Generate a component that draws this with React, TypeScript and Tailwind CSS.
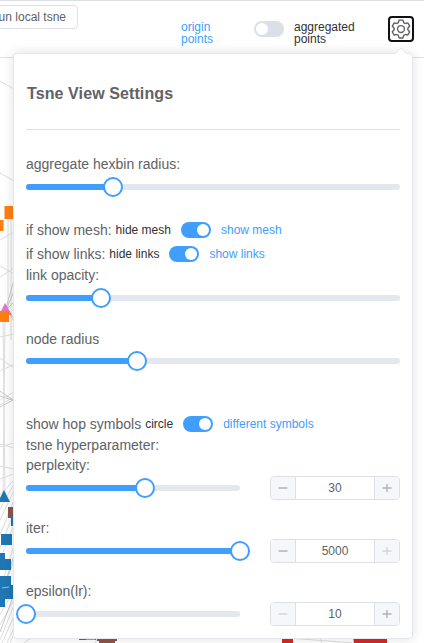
import React from "react";

function Toggle({ on }: { on: boolean }) {
  return (
    <span
      className={
        "flex h-4 w-[30px] shrink-0 items-center rounded-full px-0.5 " +
        (on ? "justify-end bg-[#409eff]" : "justify-start bg-[#dcdfe6]")
      }
    >
      <span className="size-3 rounded-full bg-white" />
    </span>
  );
}

function Slider({ value }: { value: number }) {
  return (
    <div className="relative h-1.5 w-full rounded-[3px] bg-[#e4e7ed]">
      <div className="h-1.5 rounded-l-[3px] bg-[#409eff]" style={{ width: value + "px" }} />
      <div
        className="absolute -top-[7px] size-5 -translate-x-1/2 rounded-full border-2 border-[#409eff] bg-white"
        style={{ left: value + "px" }}
      />
    </div>
  );
}

function SwitchRow({ label, off, on, className }: { label: string; off: string; on: string; className?: string }) {
  return (
    <div className={"flex h-6 items-center whitespace-nowrap " + (className ?? "")}>
      <span>{label}</span>
      <span className="ml-1 text-xs text-[#303133]">{off}</span>
      <span className="mx-2.5">
        <Toggle on />
      </span>
      <span className="text-xs text-[#409eff]">{on}</span>
    </div>
  );
}

function StepIcon({ plus, dim }: { plus?: boolean; dim?: boolean }) {
  return (
    <svg width="12" height="12" viewBox="0 0 12 12" fill="none" stroke={dim ? "#d4d6da" : "#b0b2b6"}>
      <path d="M1.5 6H10.5" strokeWidth="1.7" />
      {plus && <path d="M6 2V10" strokeWidth="1.4" />}
    </svg>
  );
}

function NumberRow({ slider, value, min, max }: { slider: number; value: string; min?: boolean; max?: boolean }) {
  return (
    <div className="mt-px flex h-6 items-center justify-between">
      <div className="w-[214px]">
        <Slider value={slider} />
      </div>
      <div className="flex h-6 w-[130px] overflow-hidden rounded-[4px] border border-[#dcdfe6] text-xs">
        <span className="flex w-[25px] items-center justify-center border-r border-[#dcdfe6] bg-[#f5f7fa]">
          <StepIcon dim={min} />
        </span>
        <span className="flex flex-1 items-center justify-center">{value}</span>
        <span className="flex w-[25px] items-center justify-center border-l border-[#dcdfe6] bg-[#f5f7fa]">
          <StepIcon plus dim={max} />
        </span>
      </div>
    </div>
  );
}

function Graph() {
  return (
    <svg className="absolute left-0 top-[58px]" width="424" height="585" viewBox="0 58 424 585">
      <g stroke="#dedede" fill="none" strokeWidth="1">
        <path d="M0 81L14 89M0 173L14 181M0 240L14 232M8 218L8 320M11 210L11 340" />
        <path d="M0 266L14 274M0 277L14 268M0 337L14 334M0 358L14 368M0 371L14 364M0 400L14 392M0 405L14 397M0 444L14 448M0 447L14 443M0 466L14 469M0 479L14 474" />
        <path d="M3 318L5 495M5 318L3 495M0 495L14 480M0 509L14 484M0 560L14 525M0 590L14 545M0 600L14 560M0 615L14 590M0 625L14 600M0 640L14 605M2 643L14 616M7 643L14 628" />
        <path d="M0 520L14 490M0 535L14 500M0 548L14 512M10 643L14 634M24 643L32 637M95 643L98 637M288 638L354 643M320 638L322 643" />
      </g>
      <g stroke="#c8c8c8" fill="none" strokeWidth="1">
        <path d="M6 308L14 280M7 308L14 291M7 309L14 302M7 310L14 321M6 310L14 318M0 391L13 400L0 407M0 396L12 400M0 600L14 555M0 632L14 594" />
      </g>
      <path d="M4.5 206H14V219H4.5ZM0 220H3.5V231H0Z" fill="#ff7f0e" />
      <path d="M5 303L12 315H-1Z" fill="#e377c2" />
      <path d="M0 311H9V322H0Z" fill="#ff7f0e" />
      <path d="M4 490L10 502H-2Z" fill="#1f77b4" />
      <path d="M8 507H14V518H8Z" fill="#8c564b" />
      <path d="M11 515H14V526H11ZM1 534H12V545H1ZM0 553H5V559H11V570H0ZM0 576H11V585H14V599H5V607H0Z" fill="#1f77b4" />
      <path d="M2 588L9 587" stroke="#9dc3df" />
      <path d="M97 637H117V641H115V643H99V641H97Z" fill="#8c564b" />
      <path d="M79 637H96V640H79Z" fill="#8c564b" />
      <path d="M86 638H95V640H86Z" fill="#d9964f" />
      <path d="M282 637H293V643H282ZM353 637H387V643H354Z" fill="#d62728" />
    </svg>
  );
}

export default function App() {
  return (
    <div className="relative h-[643px] w-[424px] overflow-hidden bg-white font-['Liberation_Sans',Arial,sans-serif] text-sm text-[#606266]">
      <header className="h-[58px] border-y border-[#dcdfe6]">
        <div className="flex items-start">
          <button className="-ml-4 mt-1 h-6 w-[94px] whitespace-nowrap rounded-[4px] border border-[#dcdfe6] bg-white pr-[11px] text-right text-xs">
            run local tsne
          </button>
          <div className="ml-[103px] mt-5 w-[63px] text-xs leading-3 text-[#409eff]">
            origin
            <br />
            points
          </div>
          <div className="ml-2.5 mt-5">
            <Toggle on={false} />
          </div>
          <div className="ml-2.5 mt-5 w-[94px] text-xs leading-3 text-[#303133]">
            aggregated
            <br />
            points
          </div>
          <button className="mt-[15px] flex size-[26px] items-center justify-center rounded-[4px] border-2 border-[#101010] bg-white">
            <svg className="shrink-0" width="22" height="22" viewBox="0 0 1024 1024" fill="#606266">
              <path d="M600.704 64a32 32 0 0 1 30.464 22.208l35.2 109.376c14.784 7.232 28.928 15.36 42.432 24.512l112.384-24.192a32 32 0 0 1 34.432 15.36L944.32 364.8a32 32 0 0 1-4.032 37.504l-77.12 85.12a357.12 357.12 0 0 1 0 49.024l77.12 85.248a32 32 0 0 1 4.032 37.504l-88.704 153.6a32 32 0 0 1-34.432 15.296L708.8 803.904c-13.44 9.088-27.648 17.28-42.368 24.512l-35.264 109.376A32 32 0 0 1 600.704 960H423.296a32 32 0 0 1-30.464-22.208L357.696 828.48a351.616 351.616 0 0 1-42.56-24.64l-112.32 24.256a32 32 0 0 1-34.432-15.36L79.68 659.2a32 32 0 0 1 4.032-37.504l77.12-85.248a357.12 357.12 0 0 1 0-48.896l-77.12-85.248A32 32 0 0 1 79.68 364.8l88.704-153.6a32 32 0 0 1 34.432-15.296l112.32 24.256c13.568-9.152 27.776-17.408 42.56-24.64l35.2-109.312A32 32 0 0 1 423.232 64H600.64zm-23.424 64H446.72l-36.352 113.088-24.512 11.968a294.113 294.113 0 0 0-34.816 20.096l-22.656 15.36-116.224-25.088-65.28 113.152 79.68 88.192-1.92 27.136a293.12 293.12 0 0 0 0 40.192l1.92 27.136-79.808 88.192 65.344 113.152 116.224-25.024 22.656 15.296a294.113 294.113 0 0 0 34.816 20.096l24.512 11.968L446.72 896h130.688l36.48-113.152 24.448-11.904a288.282 288.282 0 0 0 34.752-20.096l22.592-15.296 116.288 25.024 65.28-113.152-79.744-88.192 1.92-27.136a293.12 293.12 0 0 0 0-40.256l-1.92-27.136 79.808-88.128-65.344-113.152-116.288 24.96-22.592-15.232a287.616 287.616 0 0 0-34.752-20.096l-24.448-11.904L577.344 128zM512 320a192 192 0 1 1 0 384 192 192 0 0 1 0-384m0 64a128 128 0 1 0 0 256 128 128 0 0 0 0-256" />
            </svg>
          </button>
        </div>
      </header>

      <Graph />

      <section className="absolute left-[13px] top-[53px] h-[586px] w-[400px] rounded-[4px] border border-[#e4e7ed] bg-white px-3 shadow-[0_0_12px_rgba(0,0,0,0.12)]">
        <span className="absolute -top-[5px] left-[382px] size-2.5 rotate-45 rounded-tl-[2px] border-l border-t border-[#e4e7ed] bg-white" />
        <h3 className="mt-[30px] h-5 pl-px text-base leading-5 font-bold tracking-[0.1px]">Tsne View Settings</h3>
        <div className="mt-[25px] h-px bg-[#dcdfe6]" />

        <div className="mt-6 h-5 leading-5">aggregate hexbin radius:</div>
        <div className="mt-2.5">
          <Slider value={87} />
        </div>

        <SwitchRow className="mt-7" label="if show mesh:" off="hide mesh" on="show mesh" />
        <SwitchRow label="if show links:" off="hide links" on="show links" />
        <div className="h-[18px] leading-[18px]">link opacity:</div>
        <div className="mt-[11px]">
          <Slider value={75} />
        </div>

        <div className="mt-7 h-5 leading-5">node radius</div>
        <div className="mt-[9px]">
          <Slider value={111} />
        </div>

        <SwitchRow className="mt-12" label="show hop symbols" off="circle" on="different symbols" />
        <div className="h-[18px] leading-[18px]">tsne hyperparameter:</div>
        <div className="mt-px h-5 leading-5">perplexity:</div>
        <NumberRow slider={119} value="30" />
        <div className="mt-[18px] h-5 leading-5">iter:</div>
        <NumberRow slider={214} value="5000" max />
        <div className="mt-[18px] h-5 leading-5">epsilon(lr):</div>
        <NumberRow slider={0} value="10" min />
      </section>
    </div>
  );
}
